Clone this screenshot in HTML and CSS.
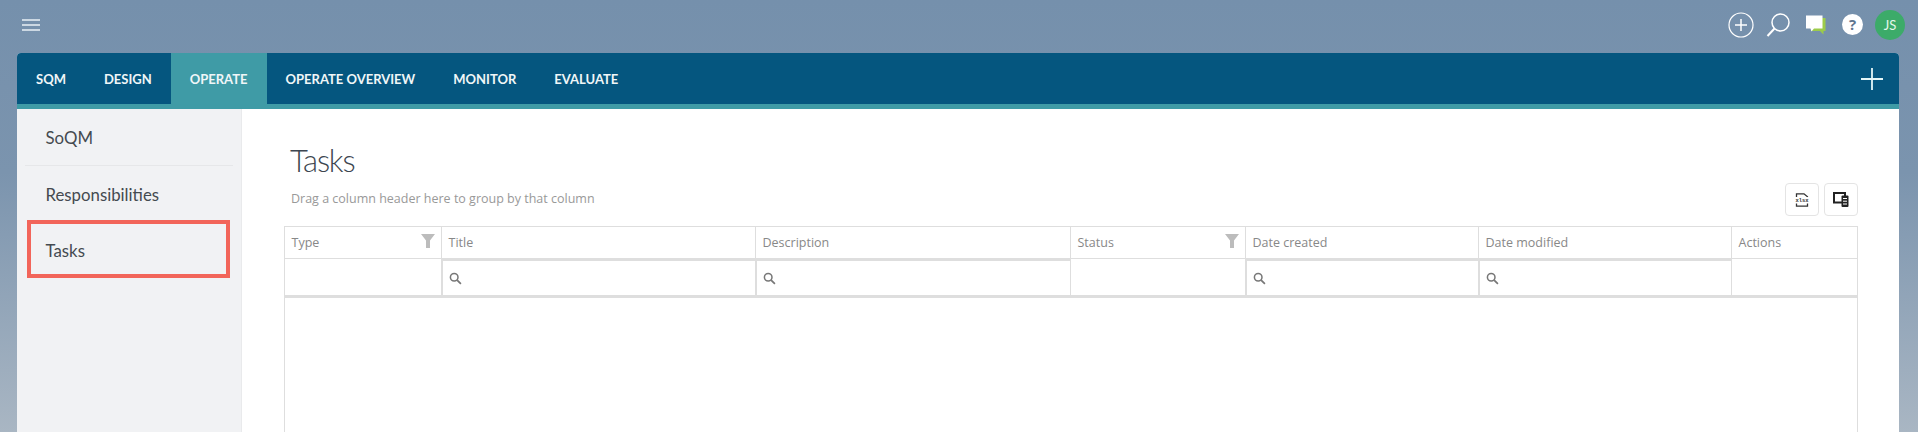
FILE: index.html
```html
<!DOCTYPE html>
<html lang="en">
<head>
<meta charset="utf-8">
<title>Tasks</title>
<link rel="stylesheet" href="styles.css">
</head>
<body>
<header class="topbar">
  <svg class="hamburger" width="18" height="12" viewBox="0 0 18 12"><path d="M0 1h18M0 6h18M0 11h18" stroke="#e9eff5" stroke-width="1.5" fill="none"/></svg>
  <div class="top-icons">
    <svg class="ic-add" width="26" height="26" viewBox="0 0 26 26"><circle cx="13" cy="13" r="12" fill="none" stroke="#fff" stroke-width="1.2"/><path d="M13 7v12M7 13h12" stroke="#fff" stroke-width="1.5" fill="none"/></svg>
    <svg class="ic-search" width="24" height="24" viewBox="0 0 24 24"><circle cx="14.5" cy="9.5" r="8.5" fill="none" stroke="#fff" stroke-width="1.5"/><path d="M8.5 15.5L1.5 23" stroke="#fff" stroke-width="2" fill="none"/></svg>
    <svg class="ic-chat" width="20" height="20" viewBox="0 0 20 20"><path d="M5 3h14.500v13h-2v3.500l-3.500-3.500H5z" fill="#9ccb4a"/><path d="M0 0.500h16.500v13H8l-2.500 3-1-3H0z" fill="#fff"/></svg>
    <svg class="ic-help" width="21" height="21" viewBox="0 0 21 21"><circle cx="10.500" cy="10.500" r="10.500" fill="#fff"/><text class="help-mark" x="10.500" y="16" text-anchor="middle">?</text></svg>
    <div class="avatar">JS</div>
  </div>
</header>

<div class="card">
  <nav class="tabs">
    <a class="tab">SQM</a>
    <a class="tab">DESIGN</a>
    <a class="tab tab-active">OPERATE</a>
    <a class="tab">OPERATE OVERVIEW</a>
    <a class="tab">MONITOR</a>
    <a class="tab">EVALUATE</a>
    <svg class="tab-add" width="24" height="24" viewBox="0 0 24 24"><path d="M12 1v22M1 12h22" stroke="#e4f6f8" stroke-width="1.800" fill="none"/></svg>
  </nav>

  <div class="content">
    <aside class="sidebar">
      <a class="side-item side-first">SoQM</a>
      <a class="side-item">Responsibilities</a>
      <a class="side-item side-last">Tasks</a>
      <div class="highlight"></div>
    </aside>

    <main class="main">
      <h1 class="title">Tasks</h1>
      <div class="toolbar">
        <span class="group-hint">Drag a column header here to group by that column</span>
        <div class="tool-buttons">
          <button class="tool-btn">
            <svg width="14" height="14" viewBox="0 0 14 14"><path d="M1.500 4V0.800h7.500l3.500 3V4M1.500 10.500v2.700h11v-2.700" fill="none" stroke="#333" stroke-width="1.300"/><text class="xlsx" x="7" y="9" text-anchor="middle">xlsx</text></svg>
          </button>
          <button class="tool-btn">
            <svg width="16" height="15" viewBox="0 0 16 15"><path d="M1 1h11v9.500H1z" fill="none" stroke="#222" stroke-width="2"/><rect x="8.500" y="3.500" width="7" height="11.500" rx="1" fill="#222"/><path d="M10 6.500h4M10 9.200h4M10 12h4" stroke="#fff" stroke-width="1"/></svg>
          </button>
        </div>
      </div>

      <div class="grid">
        <div class="head">Type<svg class="funnel" width="14" height="14" viewBox="0 0 14 14"><path d="M0 0h14L9 6.500V14H5V6.500z" fill="#bcbcbc"/></svg></div>
        <div class="head">Title</div>
        <div class="head">Description</div>
        <div class="head">Status<svg class="funnel" width="14" height="14" viewBox="0 0 14 14"><path d="M0 0h14L9 6.500V14H5V6.500z" fill="#bcbcbc"/></svg></div>
        <div class="head">Date created</div>
        <div class="head">Date modified</div>
        <div class="head head-last">Actions</div>

        <div class="filter"></div>
        <div class="filter filter-input"><svg class="mag" width="13" height="13" viewBox="0 0 12 12"><circle cx="4.800" cy="4.800" r="3.500" fill="none" stroke="#777" stroke-width="1.400"/><path d="M7.500 7.500L11 11" stroke="#777" stroke-width="1.600"/></svg></div>
        <div class="filter filter-input"><svg class="mag" width="13" height="13" viewBox="0 0 12 12"><circle cx="4.800" cy="4.800" r="3.500" fill="none" stroke="#777" stroke-width="1.400"/><path d="M7.500 7.500L11 11" stroke="#777" stroke-width="1.600"/></svg></div>
        <div class="filter"></div>
        <div class="filter filter-input"><svg class="mag" width="13" height="13" viewBox="0 0 12 12"><circle cx="4.800" cy="4.800" r="3.500" fill="none" stroke="#777" stroke-width="1.400"/><path d="M7.500 7.500L11 11" stroke="#777" stroke-width="1.600"/></svg></div>
        <div class="filter filter-input"><svg class="mag" width="13" height="13" viewBox="0 0 12 12"><circle cx="4.800" cy="4.800" r="3.500" fill="none" stroke="#777" stroke-width="1.400"/><path d="M7.500 7.500L11 11" stroke="#777" stroke-width="1.600"/></svg></div>
        <div class="filter filter-last"></div>

        <div class="grid-body"></div>
      </div>
    </main>
  </div>
</div>
</body>
</html>
```

FILE: styles.css
```css
* { box-sizing: border-box; }

html, body { height: 100%; }

body {
  margin: 0;
  height: 432px;
  overflow: hidden;
  background: linear-gradient(180deg, #7590ac 0%, #7b94ae 40%, #a9b6c3 100%);
  font-family: "Open Sans", sans-serif;
}

.topbar {
  height: 53px;
  display: flex;
  align-items: center;
  justify-content: space-between;
  padding: 0 13px 3px 22px;
}

.hamburger { display: block; }

.top-icons {
  display: flex;
  align-items: center;
}

.ic-add { margin-right: 12px; }
.ic-search { margin-right: 16px; }
.ic-chat { margin-right: 16px; }
.ic-help { margin-right: 12px; margin-top: -1px; }

.help-mark {
  font: 700 15px "Open Sans", sans-serif;
  fill: #5f7590;
}

.avatar {
  width: 30px;
  height: 30px;
  border-radius: 50%;
  background: #3cab69;
  color: #e6f7ec;
  font: 400 13px/30px "Lato", sans-serif;
  text-align: center;
}

.card {
  margin: 0 19px 0 17px;
  height: 379px;
  background: #fff;
  border-radius: 4px 4px 0 0;
  overflow: hidden;
  display: flex;
  flex-direction: column;
}

.tabs {
  height: 56px;
  flex: none;
  display: flex;
  background: #05567f;
  border-bottom: 5px solid #3f9ba6;
  padding-right: 15px;
}

.tab {
  display: flex;
  align-items: center;
  padding: 0 19px;
  color: #f0f6f8;
  font: 700 13px "Lato", sans-serif;
}

.tab-active { background: #3f9ba6; }

.tab-add {
  margin-left: auto;
  align-self: center;
}

.content {
  flex: 1;
  display: flex;
  min-height: 0;
}

.sidebar {
  position: relative;
  width: 225px;
  flex: none;
  background: #f1f2f4;
  border-right: 1px solid #e9eaec;
}

.side-item {
  display: flex;
  align-items: center;
  height: 57px;
  margin: 0 8px;
  padding-left: 20.500px;
  color: #444a50;
  font: 400 16.800px "Lato", sans-serif;
}

.side-last { height: 55px; }

.side-first { border-bottom: 1px solid #e6e7e9; }

.highlight {
  position: absolute;
  left: 10px;
  top: 111px;
  width: 203px;
  height: 58px;
  border: 4px solid #f2655a;
}

.main {
  flex: 1;
  min-width: 0;
  padding: 29px 41px 0 42px;
}

.title {
  margin: 0 0 0 6px;
  height: 45px;
  font: 300 31px/44px "Lato", sans-serif;
  letter-spacing: -1.200px;
  color: #3d4650;
}

.toolbar {
  height: 43px;
  display: flex;
  justify-content: space-between;
}

.group-hint {
  margin: 6px 0 0 7px;
  font-size: 12.500px;
  line-height: 20px;
  color: #999;
}

.tool-buttons {
  display: flex;
  gap: 5px;
}

.tool-btn {
  width: 34px;
  height: 33px;
  padding: 0;
  display: flex;
  align-items: center;
  justify-content: center;
  background: #fff;
  border: 1px solid #e4e4e4;
  border-radius: 4px;
}

.xlsx {
  font: 700 5.500px "Liberation Mono", monospace;
  fill: #333;
}

.grid {
  display: grid;
  grid-template-columns: 157px 314px 315px 175px 233px 253px 127px;
  grid-template-rows: 32px 39px 200px;
  border-top: 1px solid #dedede;
}

.head {
  position: relative;
  display: flex;
  align-items: center;
  justify-content: space-between;
  padding: 0 6px 0 6.500px;
  font-size: 12.500px;
  color: #888;
  border-left: 1px solid #dedede;
  border-bottom: 1px solid #dedede;
}

.head-last { border-right: 1px solid #dedede; }

.funnel { margin-top: -3px; }

.filter {
  display: flex;
  align-items: center;
  padding-left: 6px;
  border-left: 1px solid #dedede;
  border-bottom: 3px solid #dedede;
}

.filter-input {
  border-left: 2px solid #dedede;
  border-top: 2px solid #dedede;
}

.filter-last { border-right: 1px solid #dedede; }

.grid-body {
  grid-column: 1 / -1;
  border-left: 1px solid #dedede;
  border-right: 1px solid #dedede;
}
```
